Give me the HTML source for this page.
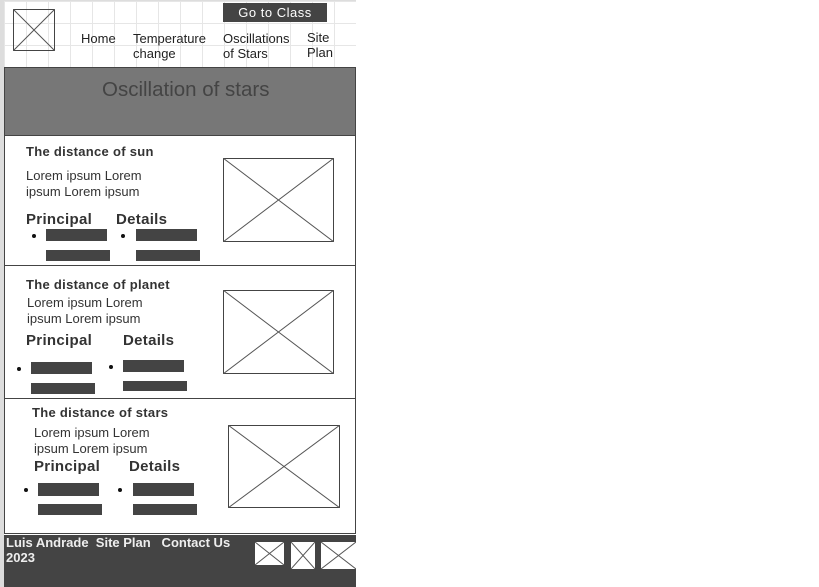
<!DOCTYPE html>
<html><head><meta charset="utf-8"><style>
*{margin:0;padding:0;box-sizing:border-box}
body{width:819px;height:587px;background:#fff;position:relative;overflow:hidden;font-family:"Liberation Sans",sans-serif;color:#333}
.a{position:absolute;white-space:nowrap}
#hdr{position:absolute;left:4px;top:1px;width:352px;height:66px;background-color:#fff;
background-image:linear-gradient(90deg,#e6e6e6 1px,transparent 1px),linear-gradient(#e6e6e6 1px,transparent 1px);
background-size:22px 22px;background-position:22px 0,0 22px}
.nav{font-size:13px;line-height:15px;color:#222}
.bar{position:absolute;background:#444}
.dot{position:absolute;width:4px;height:4px;border-radius:50%;background:#111}
.sec{position:absolute;left:4px;width:352px;border:1px solid #444;background:#fff}
.h3{font-size:13px;font-weight:bold;color:#333;letter-spacing:.3px}
.p{font-size:13px;line-height:16px;color:#333}
.h4{font-size:15px;font-weight:bold;color:#333;letter-spacing:.3px}
svg{position:absolute}
</style></head><body>
<div class="a" style="left:0;top:0;width:4px;height:587px;background:#ddd"></div>
<div class="a" style="left:0;top:0;width:356px;height:1px;background:#ddd"></div>
<div id="hdr"></div>
<svg style="left:13px;top:9px" width="42" height="42"><rect x=".5" y=".5" width="41" height="41" fill="none" stroke="#444"/><path d="M0 0L42 42M42 0L0 42" stroke="#555"/></svg>
<div class="a" style="left:223px;top:3px;width:104px;height:19px;background:#444;color:#fff;font-size:13px;line-height:19px;text-align:center;letter-spacing:.5px">Go to Class</div>
<div class="a nav" style="left:81px;top:31px">Home</div>
<div class="a nav" style="left:133px;top:31px">Temperature<br>change</div>
<div class="a nav" style="left:223px;top:31px">Oscillations<br>of Stars</div>
<div class="a nav" style="left:307px;top:30px">Site<br>Plan</div>
<div class="a" style="left:4px;top:67px;width:352px;height:69px;background:#777;border:1px solid #444"></div>
<div class="a" style="left:102px;top:78px;font-size:20.5px;color:#444">Oscillation of stars</div>

<div class="sec" style="top:135px;height:131px"></div>
<div class="a h3" style="left:26px;top:144px">The distance of sun</div>
<div class="a p" style="left:26px;top:168px">Lorem ipsum Lorem<br>ipsum Lorem ipsum</div>
<div class="a h4" style="left:26px;top:211px">Principal</div>
<div class="a h4" style="left:116px;top:211px">Details</div>
<div class="dot" style="left:32px;top:234px"></div><div class="dot" style="left:121px;top:234px"></div>
<div class="bar" style="left:46px;top:229px;width:61px;height:12px"></div>
<div class="bar" style="left:46px;top:250px;width:64px;height:11px"></div>
<div class="bar" style="left:136px;top:229px;width:61px;height:12px"></div>
<div class="bar" style="left:136px;top:250px;width:64px;height:11px"></div>
<svg style="left:223px;top:158px" width="111" height="84"><rect x=".5" y=".5" width="110" height="83" fill="none" stroke="#444"/><path d="M0 0L111 84M111 0L0 84" stroke="#555"/></svg>

<div class="sec" style="top:265px;height:134px"></div>
<div class="a h3" style="left:26px;top:277px">The distance of planet</div>
<div class="a p" style="left:27px;top:295px">Lorem ipsum Lorem<br>ipsum Lorem ipsum</div>
<div class="a h4" style="left:26px;top:332px">Principal</div>
<div class="a h4" style="left:123px;top:332px">Details</div>
<div class="dot" style="left:17px;top:367px"></div><div class="dot" style="left:109px;top:365px"></div>
<div class="bar" style="left:31px;top:362px;width:61px;height:12px"></div>
<div class="bar" style="left:31px;top:383px;width:64px;height:11px"></div>
<div class="bar" style="left:123px;top:360px;width:61px;height:12px"></div>
<div class="bar" style="left:123px;top:381px;width:64px;height:10px"></div>
<svg style="left:223px;top:290px" width="111" height="84"><rect x=".5" y=".5" width="110" height="83" fill="none" stroke="#444"/><path d="M0 0L111 84M111 0L0 84" stroke="#555"/></svg>

<div class="sec" style="top:398px;height:136px"></div>
<div class="a h3" style="left:32px;top:405px">The distance of stars</div>
<div class="a p" style="left:34px;top:425px">Lorem ipsum Lorem<br>ipsum Lorem ipsum</div>
<div class="a h4" style="left:34px;top:458px">Principal</div>
<div class="a h4" style="left:129px;top:458px">Details</div>
<div class="dot" style="left:24px;top:488px"></div><div class="dot" style="left:118px;top:488px"></div>
<div class="bar" style="left:38px;top:483px;width:61px;height:13px"></div>
<div class="bar" style="left:38px;top:504px;width:64px;height:11px"></div>
<div class="bar" style="left:133px;top:483px;width:61px;height:13px"></div>
<div class="bar" style="left:133px;top:504px;width:64px;height:11px"></div>
<svg style="left:228px;top:425px" width="112" height="83"><rect x=".5" y=".5" width="111" height="82" fill="none" stroke="#444"/><path d="M0 0L112 83M112 0L0 83" stroke="#555"/></svg>

<div class="a" style="left:4px;top:535px;width:352px;height:52px;background:#444"></div>
<div class="a" style="left:6px;top:535px;font-size:13px;font-weight:bold;line-height:15px;color:#eee">Luis Andrade&nbsp; Site Plan&nbsp;&nbsp; Contact Us<br>2023</div>
<svg style="left:255px;top:542px" width="29" height="23"><rect width="29" height="23" fill="#fff"/><path d="M0 0L29 23M29 0L0 23" stroke="#555"/></svg>
<svg style="left:291px;top:542px" width="24" height="27"><rect width="24" height="27" fill="#fff"/><path d="M0 0L24 27M24 0L0 27" stroke="#555"/></svg>
<svg style="left:321px;top:542px" width="35" height="27"><rect width="35" height="27" fill="#fff"/><path d="M0 0L35 27M35 0L0 27" stroke="#555"/></svg>
</body></html>
